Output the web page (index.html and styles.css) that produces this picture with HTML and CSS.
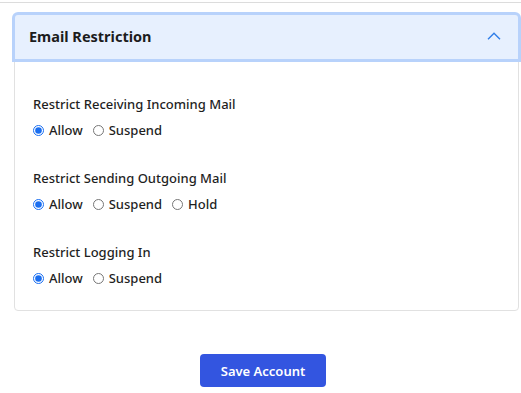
FILE: index.html
```html
<!DOCTYPE html>
<html lang="en">
<head>
    <meta charset="UTF-8">
    <meta name="viewport" content="width=device-width, initial-scale=1.0">
    <title>Email Restriction</title>
    <link rel="stylesheet" href="styles.css">
</head>
<body>
    <div class="topbar"></div>

    <div class="accordion">
        <div class="accordion-header">
            <span class="accordion-title">Email Restriction</span>
            <svg class="chevron" width="14" height="8" viewBox="0 0 14 8">
                <path d="M1 7.2 L7 1.2 L13 7.2" fill="none" stroke="#2f7de8" stroke-width="1.4"/>
            </svg>
        </div>
        <div class="accordion-body">
            <div class="field">
                <div class="field-label">Restrict Receiving Incoming Mail</div>
                <div class="options">
                    <label><input type="radio" name="incoming" checked> Allow</label>
                    <label><input type="radio" name="incoming"> Suspend</label>
                </div>
            </div>
            <div class="field">
                <div class="field-label">Restrict Sending Outgoing Mail</div>
                <div class="options">
                    <label><input type="radio" name="outgoing" checked> Allow</label>
                    <label><input type="radio" name="outgoing"> Suspend</label>
                    <label><input type="radio" name="outgoing"> Hold</label>
                </div>
            </div>
            <div class="field">
                <div class="field-label">Restrict Logging In</div>
                <div class="options">
                    <label><input type="radio" name="login" checked> Allow</label>
                    <label><input type="radio" name="login"> Suspend</label>
                </div>
            </div>
        </div>
    </div>

    <div class="actions">
        <button class="btn-save">Save Account</button>
    </div>
</body>
</html>
```

FILE: styles.css
```css
body {
    margin: 0;
    background: #fff;
    color: #1f1f1f;
    font-family: 'Noto Sans', sans-serif;
}
.topbar {
    height: 2px;
    border-bottom: 1px solid #dcdcdc;
}
.accordion {
    margin: 11px 0 0 14px;
    width: 503px;
    border: 1px solid #e1e1e1;
    border-radius: 4px;
}
.accordion-header {
    display: flex;
    align-items: center;
    justify-content: space-between;
    height: 42px;
    padding: 0 17px 2px 14px;
    background: #e7f0fe;
    border-radius: 3px 3px 0 0;
    box-shadow: 0 0 0 3px #b8d2fb;
    position: relative;
}
.accordion-title {
    font-size: 14.5px;
    font-weight: 700;
    color: #1c1c1c;
}
.chevron {
    display: block;
}
.accordion-body {
    padding: 35px 18px 22px;
}
.field {
    margin-bottom: 28px;
}
.field:last-child {
    margin-bottom: 0;
}
.field-label {
    font-size: 13px;
    font-weight: 500;
    line-height: 20px;
    margin-bottom: 6px;
}
.options {
    display: flex;
    gap: 10px;
    font-size: 13px;
    font-weight: 500;
    line-height: 20px;
}
.options label {
    display: flex;
    align-items: center;
}
.options input {
    width: 11px;
    height: 11px;
    margin: 0 5px 0 0;
    accent-color: #1a6ef0;
}
.actions {
    display: flex;
    justify-content: center;
    padding-left: 5px;
    margin-top: 43px;
}
.btn-save {
    width: 126px;
    height: 33px;
    background: #3355e0;
    color: #fff;
    border: none;
    border-radius: 4px;
    font-family: 'Noto Sans', sans-serif;
    font-size: 13px;
    font-weight: 600;
}
```
